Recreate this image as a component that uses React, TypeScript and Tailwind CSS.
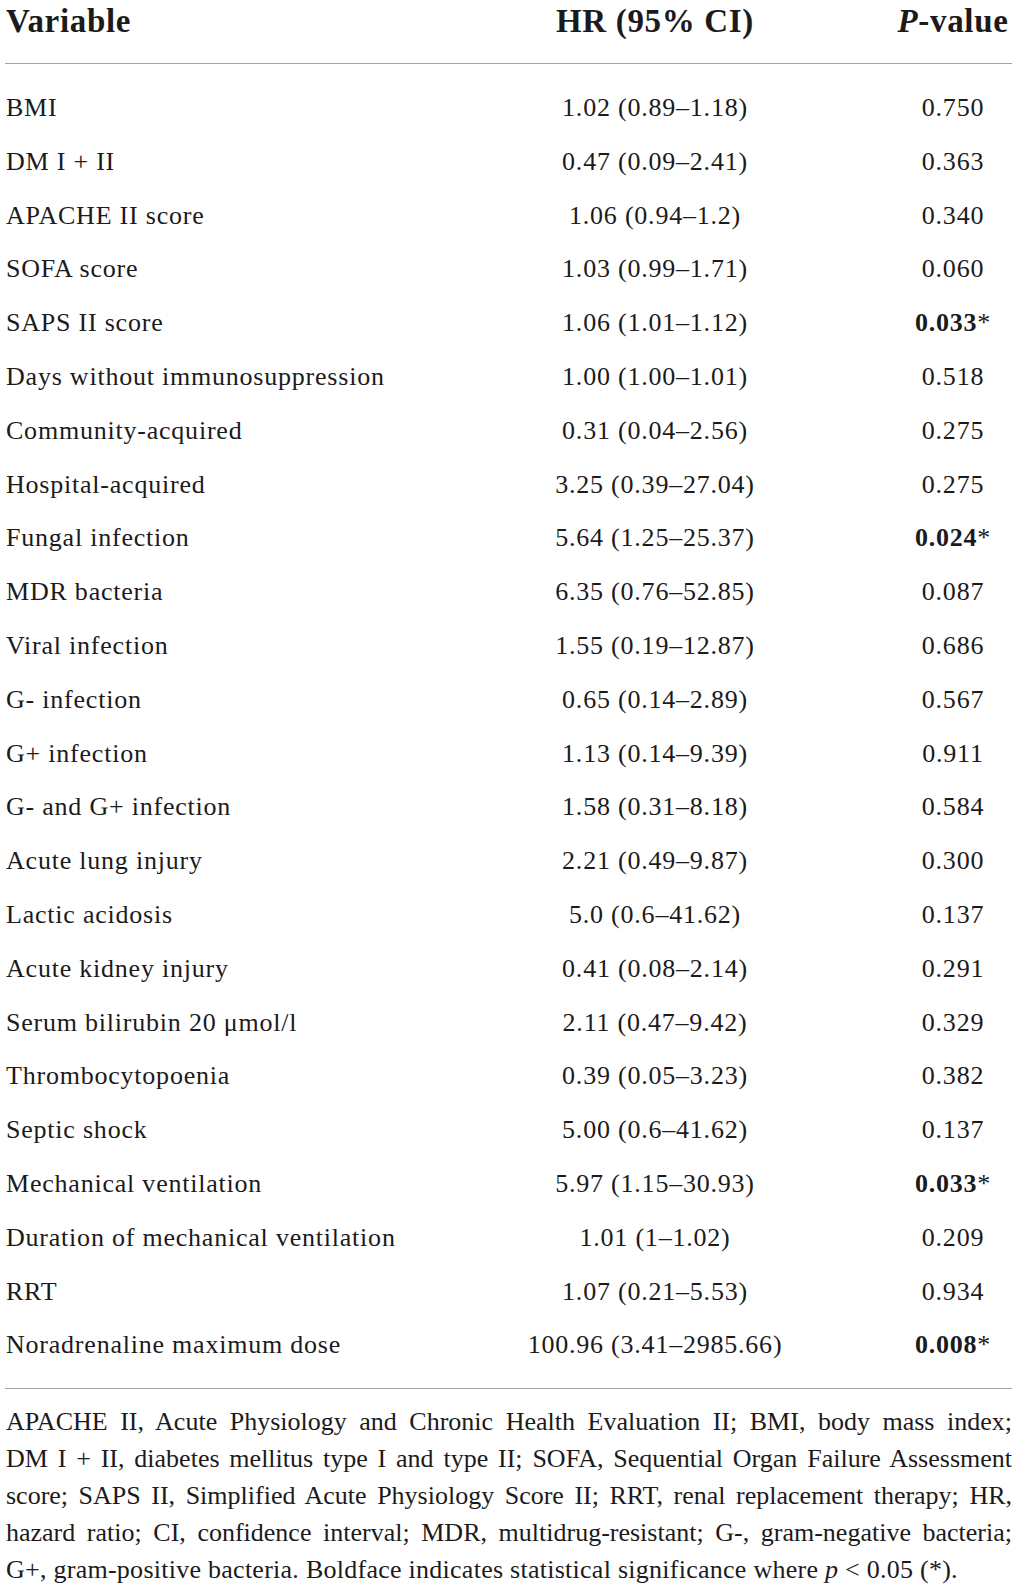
const rows: [string, string, string, boolean][] = [
  ['BMI', '1.02 (0.89–1.18)', '0.750', false],
  ['DM I + II', '0.47 (0.09–2.41)', '0.363', false],
  ['APACHE II score', '1.06 (0.94–1.2)', '0.340', false],
  ['SOFA score', '1.03 (0.99–1.71)', '0.060', false],
  ['SAPS II score', '1.06 (1.01–1.12)', '0.033', true],
  ['Days without immunosuppression', '1.00 (1.00–1.01)', '0.518', false],
  ['Community-acquired', '0.31 (0.04–2.56)', '0.275', false],
  ['Hospital-acquired', '3.25 (0.39–27.04)', '0.275', false],
  ['Fungal infection', '5.64 (1.25–25.37)', '0.024', true],
  ['MDR bacteria', '6.35 (0.76–52.85)', '0.087', false],
  ['Viral infection', '1.55 (0.19–12.87)', '0.686', false],
  ['G- infection', '0.65 (0.14–2.89)', '0.567', false],
  ['G+ infection', '1.13 (0.14–9.39)', '0.911', false],
  ['G- and G+ infection', '1.58 (0.31–8.18)', '0.584', false],
  ['Acute lung injury', '2.21 (0.49–9.87)', '0.300', false],
  ['Lactic acidosis', '5.0 (0.6–41.62)', '0.137', false],
  ['Acute kidney injury', '0.41 (0.08–2.14)', '0.291', false],
  ['Serum bilirubin 20 μmol/l', '2.11 (0.47–9.42)', '0.329', false],
  ['Thrombocytopoenia', '0.39 (0.05–3.23)', '0.382', false],
  ['Septic shock', '5.00 (0.6–41.62)', '0.137', false],
  ['Mechanical ventilation', '5.97 (1.15–30.93)', '0.033', true],
  ['Duration of mechanical ventilation', '1.01 (1–1.02)', '0.209', false],
  ['RRT', '1.07 (0.21–5.53)', '0.934', false],
  ['Noradrenaline maximum dose', '100.96 (3.41–2985.66)', '0.008', true],
];

const noteLines = [
  'APACHE II, Acute Physiology and Chronic Health Evaluation II; BMI, body mass index;',
  'DM I + II, diabetes mellitus type I and type II; SOFA, Sequential Organ Failure Assessment',
  'score; SAPS II, Simplified Acute Physiology Score II; RRT, renal replacement therapy; HR,',
  'hazard ratio; CI, confidence interval; MDR, multidrug-resistant; G-, gram-negative bacteria;',
];

export default function App() {
  return (
    <div className="w-[1017px] bg-white px-[5px] text-[#1c1a1b] font-['Liberation_Serif','Times_New_Roman',serif]">
      {/* Header */}
      <div className="grid grid-cols-[411px_478px_118px] pt-px text-[33px] font-bold leading-[40px] tracking-[0.02em]">
        <div className="pl-px">Variable</div>
        <div className="text-center">HR (95% CI)</div>
        <div className="text-center">
          <span className="italic">P</span>-value
        </div>
      </div>
      <div className="mt-[22px] h-px bg-[#a3a3a3]" />

      {/* Body */}
      <div className="pt-[17px] pb-[16px] text-[26px] leading-[53.8px] tracking-[0.03em]">
        {rows.map(([name, hr, p, sig]) => (
          <div key={name} className="grid grid-cols-[411px_478px_118px]">
            <div className="pl-px whitespace-nowrap">{name}</div>
            <div className="text-center whitespace-nowrap">{hr}</div>
            <div className="text-center">
              {sig ? (
                <>
                  <span className="font-bold">{p}</span>*
                </>
              ) : (
                p
              )}
            </div>
          </div>
        ))}
      </div>
      <div className="h-px bg-[#a3a3a3]" />

      {/* Footnote */}
      <div className="pt-[14px] pl-px text-[26px] leading-[37px]">
        {noteLines.map((l) => (
          <div key={l} className="whitespace-nowrap text-justify [text-align-last:justify]">
            {l}
          </div>
        ))}
        <div className="whitespace-nowrap tracking-[0.01em]">
          G+, gram-positive bacteria. Boldface indicates statistical significance where{' '}
          <span className="italic">p</span> &lt; 0.05 (*).
        </div>
      </div>
    </div>
  );
}
